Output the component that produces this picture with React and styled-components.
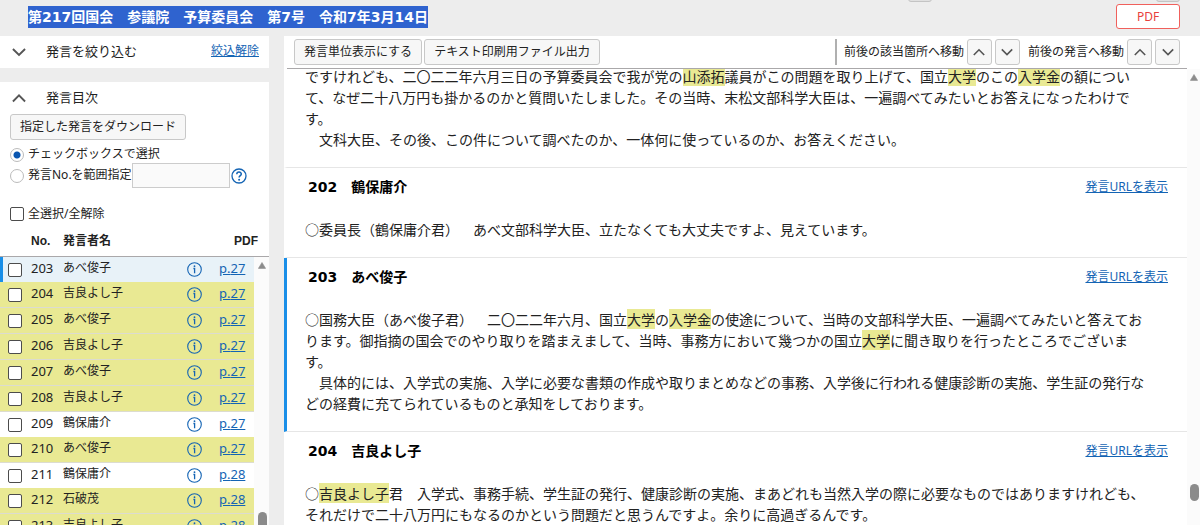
import React from "react";
import styled, { createGlobalStyle, css } from "styled-components";

const color = {
  page: "#ededed",
  text: "#222",
  link: "#1464b4",
  mark: "#e9e993",
  rule: "#aaa8aa",
  accent: "#1a8fe8",
  thumb: "#8b8b8b",
};

const GlobalStyle = createGlobalStyle`
  *, *::before, *::after { box-sizing: border-box; }
  body {
    margin: 0;
    background: ${color.page};
    color: ${color.text};
    font-family: "Noto Sans", "Noto Sans CJK JP", sans-serif;
    font-size: 12px;
    line-height: 18px;
    text-spacing-trim: space-all;
  }
  button, input { font: inherit; color: inherit; margin: 0; }
  h1, h2, h3, p { margin: 0; }
`;

const Page = styled.div`
  display: flex;
  flex-direction: column;
  height: 100vh;
  overflow: hidden;
`;

const SearchStrip = styled.div`
  display: flex;
  flex: none;
  align-items: flex-end;
  justify-content: flex-end;
  gap: 224px;
  height: 2px;
  padding-right: 20px;
  overflow: hidden;
`;

const StripButton = styled.button`
  flex: none;
  width: 24px;
  height: 24px;
  border: 1px solid #c4c4c4;
  border-radius: 3px;
  background: #e0e0e0;
`;

const Header = styled.header`
  display: flex;
  flex: none;
  align-items: flex-start;
  justify-content: space-between;
  height: 34px;
  padding: 2px 20px 0 28px;
`;

const Title = styled.h1`
  margin-top: 2px;
  background: #2f63cf;
  color: #fff;
  font-family: "DejaVu Sans", "Noto Sans CJK JP", sans-serif;
  font-size: 14px;
  font-weight: 700;
  line-height: 22px;
`;

const PdfButton = styled.button`
  width: 64px;
  height: 25px;
  padding: 0;
  border: 1px solid #f0605c;
  border-radius: 3px;
  background: #fff;
  color: #e8403c;
`;

const Columns = styled.div`
  display: flex;
  flex: 1;
  gap: 15px;
  min-height: 0;
`;

const Sidebar = styled.aside`
  display: flex;
  flex: none;
  flex-direction: column;
  gap: 14px;
  width: 269px;
`;

const Panel = styled.section`
  background: #fff;
  ${(p) => p.$fill && css`
    display: flex;
    flex: 1;
    flex-direction: column;
    min-height: 0;
  `}
`;

const PanelHead = styled.div`
  display: flex;
  align-items: center;
  height: 32px;
  padding: 0 10px 3px 12px;
`;

const ToggleButton = styled.button`
  display: flex;
  margin-right: 20px;
  padding: 3px 0 0;
  border: 0;
  background: none;
  color: #555;
`;

const PanelTitle = styled.h2`
  flex: 1;
  font-size: 13px;
  font-weight: 400;
`;

const Link = styled.a`
  color: ${color.link};
  text-decoration: underline;
`;

const PushButton = styled.button`
  height: 26px;
  padding: 0 9px 1px;
  border: 1px solid #c8c8c8;
  border-radius: 3px;
  background: #f7f7f7;
  white-space: nowrap;
`;

const StepButton = styled.button`
  display: flex;
  align-items: center;
  justify-content: center;
  width: 25px;
  height: 26px;
  padding: 0;
  border: 1px solid #c8c8c8;
  border-radius: 3px;
  background: #f7f7f7;
  color: #555;
`;

const Options = styled.div`
  padding: 0 10px;
`;

const OptionRow = styled.div`
  display: flex;
  align-items: center;
  height: ${(p) => p.$height}px;
  margin-top: ${(p) => p.$gap || 0}px;

  label { padding-bottom: 1px; }
`;

const Radio = styled.input`
  appearance: none;
  flex: none;
  width: 14px;
  height: 14px;
  margin-right: 4px;
  border: 1px solid #bbb;
  border-radius: 50%;
  background: #fff;

  &:checked {
    background: radial-gradient(circle, #0a56b0 0 3px, #fff 4px);
  }
`;

const Checkbox = styled.input`
  appearance: none;
  display: block;
  flex: none;
  width: 14px;
  height: 14px;
  border: 1px solid #4c4c4c;
  border-radius: 2px;
  background: #fff;
`;

const AllCheckbox = styled(Checkbox)`
  margin-right: 4px;
`;

const RangeInput = styled.input`
  width: 98px;
  height: 25px;
  margin-right: 1px;
  border: 1px solid #ccc;
  background: #fafafa;
`;

const IconButton = styled.button`
  display: block;
  padding: 0;
  border: 0;
  background: none;
  color: ${color.link};

  svg { display: block; }
`;

const ListPane = styled.div`
  position: relative;
  flex: 1;
  min-height: 0;
  overflow: hidden;
`;

const SpeechTable = styled.table`
  width: 100%;
  table-layout: fixed;
  border-spacing: 0;
  text-align: left;

  th, td { padding: 0; }

  th {
    height: 33px;
    padding-top: 2px;
    border-bottom: 1px solid ${color.rule};
    font-family: "Liberation Sans", "Noto Sans CJK JP", sans-serif;
    font-weight: 700;
  }

  th:last-child { padding-left: 15px; }
`;

const SpeechRow = styled.tr`
  background: ${(p) => (p.$hit ? color.mark : p.$current ? "#e8f2f8" : "#fff")};

  td {
    height: ${(p) => (p.$hit ? 26 : 25)}px;
    border-bottom: ${(p) => (p.$hit ? "1px solid #dcdcd0" : "0")};
    line-height: 18px;
  }

  td:first-child {
    padding-left: ${(p) => (p.$current ? 5 : 8)}px;
    border-left: ${(p) => (p.$current ? `3px solid ${color.accent}` : "0")};
  }
`;

const TextCell = styled.td`
  && {
    padding-bottom: 3px;
    font-size: ${(p) => (p.$name ? 12 : 13)}px;
  }
`;

const Rail = styled.div`
  position: absolute;
  top: ${(p) => p.$top || 0}px;
  right: 0;
  bottom: 0;
  width: ${(p) => p.$width}px;
  padding-top: 5px;
  background: #fbfbfb;

  svg { display: block; margin: 0 auto; }
`;

const Thumb = styled.div`
  position: absolute;
  top: ${(p) => p.$at};
  left: 50%;
  width: 9px;
  height: ${(p) => p.$length}px;
  margin-left: -4px;
  border-radius: 5px;
  background: ${color.thumb};
`;

const Main = styled.main`
  display: flex;
  flex: 1;
  flex-direction: column;
  min-width: 0;
  background: #fff;
`;

const Toolbar = styled.div`
  display: flex;
  flex: none;
  align-items: flex-start;
  gap: 2px;
  height: 33px;
  margin: 0 13px 0 3px;
  padding: 3px 7px 0;
  border-bottom: 1px solid ${color.rule};
`;

const Mover = styled.div`
  display: flex;
  align-items: center;
  gap: 3px;
  height: 26px;
  margin-left: auto;
  padding-left: 7px;
  border-left: 2px solid #b0b0b0;
`;

const MoverLabel = styled.span`
  padding-bottom: 1px;
  white-space: nowrap;

  button + & { margin-left: 5px; }
`;

const Viewport = styled.div`
  position: relative;
  flex: 1;
  min-height: 0;
  padding-right: 13px;
  overflow: hidden;
`;

/* The transcript is scrolled so that its first line is partly cut off. */
const Transcript = styled.div`
  margin-top: -3px;
`;

const Speech = styled.article`
  padding: 0 19px 17px 18px;
  border-bottom: 1px solid #e6e6e6;
  border-left: 3px solid ${(p) => (p.$current ? color.accent : "#fff")};
`;

const SpeechHead = styled.div`
  display: flex;
  align-items: center;
  justify-content: space-between;
  height: 51px;
  padding: 8px 0 21px 3px;
`;

const Speaker = styled.h3`
  color: #000;
  font-family: "DejaVu Sans", "Noto Sans CJK JP", sans-serif;
  font-size: 14px;
  line-height: 22px;
`;

const SpeechText = styled.p`
  padding-right: 18px;
  font-family: "Noto Sans CJK JP", sans-serif;
  font-size: 14px;
  font-weight: 400;
  line-height: 21px;
`;

const Mark = styled.mark`
  background: ${color.mark};
  color: inherit;
`;

const Chevron = ({ up, size = 12 }) => (
  <svg width={size} height={size} viewBox="0 0 12 12" fill="none" stroke="currentColor" strokeWidth="1.6" aria-hidden="true">
    <path d={up ? "M.8 9 6 3.8 11.2 9" : "M.8 3.4 6 8.6l5.2-5.2"} />
  </svg>
);

const InfoIcon = () => (
  <svg width="15" height="15" viewBox="0 0 15 15" fill="none" stroke="currentColor" aria-hidden="true">
    <circle cx="7.5" cy="7.5" r="6.8" strokeWidth="1.1" />
    <path d="M6.4 6.5h1.2v4.8" strokeWidth="1.3" />
    <circle cx="7.5" cy="4.2" r=".9" fill="currentColor" stroke="none" />
  </svg>
);

const HelpIcon = () => (
  <svg width="16" height="16" viewBox="0 0 16 16" fill="none" stroke="currentColor" aria-hidden="true">
    <circle cx="8" cy="8" r="7" strokeWidth="1.3" />
    <path d="M5.8 6.2C5.8 3.4 10.3 3.4 10.3 6c0 1.7-2.2 1.7-2.2 3.6" strokeWidth="1.5" />
    <circle cx="8.1" cy="11.8" r="1" fill="currentColor" stroke="none" />
  </svg>
);

const RailArrow = () => (
  <svg width="8" height="7" viewBox="0 0 8 7" aria-hidden="true">
    <path d="M4 .5 7.6 6.4H.4Z" fill={color.thumb} stroke={color.thumb} strokeWidth=".6" strokeLinejoin="round" />
  </svg>
);

const rows = [
  { no: 203, name: "あべ俊子", page: 27, current: true },
  { no: 204, name: "吉良よし子", page: 27, hit: true },
  { no: 205, name: "あべ俊子", page: 27, hit: true },
  { no: 206, name: "吉良よし子", page: 27, hit: true },
  { no: 207, name: "あべ俊子", page: 27, hit: true },
  { no: 208, name: "吉良よし子", page: 27, hit: true },
  { no: 209, name: "鶴保庸介", page: 27 },
  { no: 210, name: "あべ俊子", page: 27, hit: true },
  { no: 211, name: "鶴保庸介", page: 28 },
  { no: 212, name: "石破茂", page: 28, hit: true },
  { no: 213, name: "吉良よし子", page: 28, hit: true },
];

const SpeechHeader = ({ no, name }) => (
  <SpeechHead>
    <Speaker>{no}　{name}</Speaker>
    <Link href="#url">発言URLを表示</Link>
  </SpeechHead>
);

export default function App() {
  return (
    <Page>
      <GlobalStyle />
      <SearchStrip>
        <StripButton aria-label="前へ" />
        <StripButton aria-label="次へ" />
      </SearchStrip>
      <Header>
        <Title>第217回国会　参議院　予算委員会　第7号　令和7年3月14日</Title>
        <PdfButton>PDF</PdfButton>
      </Header>
      <Columns>
        <Sidebar>
          <Panel>
            <PanelHead>
              <ToggleButton aria-label="開く"><Chevron size={14} /></ToggleButton>
              <PanelTitle>発言を絞り込む</PanelTitle>
              <Link href="#clear">絞込解除</Link>
            </PanelHead>
          </Panel>
          <Panel $fill>
            <PanelHead>
              <ToggleButton aria-label="閉じる"><Chevron up size={14} /></ToggleButton>
              <PanelTitle>発言目次</PanelTitle>
            </PanelHead>
            <Options>
              <PushButton>指定した発言をダウンロード</PushButton>
              <OptionRow $height={17} $gap={6}>
                <Radio type="radio" name="mode" id="by-check" defaultChecked />
                <label htmlFor="by-check">チェックボックスで選択</label>
              </OptionRow>
              <OptionRow $height={25}>
                <Radio type="radio" name="mode" id="by-range" />
                <label htmlFor="by-range">発言No.を範囲指定</label>
                <RangeInput type="text" aria-label="発言No.の範囲" />
                <IconButton aria-label="ヘルプ"><HelpIcon /></IconButton>
              </OptionRow>
              <OptionRow $height={20} $gap={16}>
                <AllCheckbox type="checkbox" id="all" />
                <label htmlFor="all">全選択/全解除</label>
              </OptionRow>
            </Options>
            <ListPane>
              <SpeechTable>
                <colgroup>
                  <col width="31" />
                  <col width="32" />
                  <col />
                  <col width="32" />
                  <col width="50" />
                </colgroup>
                <thead>
                  <tr>
                    <th />
                    <th>No.</th>
                    <th>発言者名</th>
                    <th />
                    <th>PDF</th>
                  </tr>
                </thead>
                <tbody>
                  {rows.map((r) => (
                    <SpeechRow key={r.no} $hit={r.hit} $current={r.current}>
                      <td><Checkbox type="checkbox" aria-label={`${r.no} ${r.name}`} /></td>
                      <TextCell>{r.no}</TextCell>
                      <TextCell $name>{r.name}</TextCell>
                      <td><IconButton aria-label="詳細"><InfoIcon /></IconButton></td>
                      <TextCell><Link href={`#p${r.page}`}>p.{r.page}</Link></TextCell>
                    </SpeechRow>
                  ))}
                </tbody>
              </SpeechTable>
              <Rail $width={15} $top={33}>
                <RailArrow />
                <Thumb $at="95%" $length={40} />
              </Rail>
            </ListPane>
          </Panel>
        </Sidebar>
        <Main>
          <Toolbar>
            <PushButton>発言単位表示にする</PushButton>
            <PushButton>テキスト印刷用ファイル出力</PushButton>
            <Mover>
              <MoverLabel>前後の該当箇所へ移動</MoverLabel>
              <StepButton aria-label="前の該当箇所"><Chevron up /></StepButton>
              <StepButton aria-label="次の該当箇所"><Chevron /></StepButton>
              <MoverLabel>前後の発言へ移動</MoverLabel>
              <StepButton aria-label="前の発言"><Chevron up /></StepButton>
              <StepButton aria-label="次の発言"><Chevron /></StepButton>
            </Mover>
          </Toolbar>
          <Viewport>
            <Transcript>
              <Speech>
                <SpeechText>
                  ですけれども、二〇二二年六月三日の予算委員会で我が党の<Mark>山添拓</Mark>議員がこの問題を取り上げて、国立<Mark>大学</Mark>のこの<Mark>入学金</Mark>の額について、なぜ二十八万円も掛かるのかと質問いたしました。その当時、末松文部科学大臣は、一遍調べてみたいとお答えになったわけです。
                  <br />　文科大臣、その後、この件について調べたのか、一体何に使っているのか、お答えください。
                </SpeechText>
              </Speech>
              <Speech>
                <SpeechHeader no="202" name="鶴保庸介" />
                <SpeechText>○委員長（鶴保庸介君）　あべ文部科学大臣、立たなくても大丈夫ですよ、見えています。</SpeechText>
              </Speech>
              <Speech $current>
                <SpeechHeader no="203" name="あべ俊子" />
                <SpeechText>
                  ○国務大臣（あべ俊子君）　二〇二二年六月、国立<Mark>大学</Mark>の<Mark>入学金</Mark>の使途について、当時の文部科学大臣、一遍調べてみたいと答えております。御指摘の国会でのやり取りを踏まえまして、当時、事務方において幾つかの国立<Mark>大学</Mark>に聞き取りを行ったところでございます。
                  <br />　具体的には、入学式の実施、入学に必要な書類の作成や取りまとめなどの事務、入学後に行われる健康診断の実施、学生証の発行などの経費に充てられているものと承知をしております。
                </SpeechText>
              </Speech>
              <Speech>
                <SpeechHeader no="204" name="吉良よし子" />
                <SpeechText>
                  ○<Mark>吉良よし子</Mark>君　入学式、事務手続、学生証の発行、健康診断の実施、まあどれも当然入学の際に必要なものではありますけれども、それだけで二十八万円にもなるのかという問題だと思うんですよ。余りに高過ぎるんです。
                </SpeechText>
              </Speech>
            </Transcript>
            <Rail $width={13}>
              <RailArrow />
              <Thumb $at="91%" $length={17} />
            </Rail>
          </Viewport>
        </Main>
      </Columns>
    </Page>
  );
}
